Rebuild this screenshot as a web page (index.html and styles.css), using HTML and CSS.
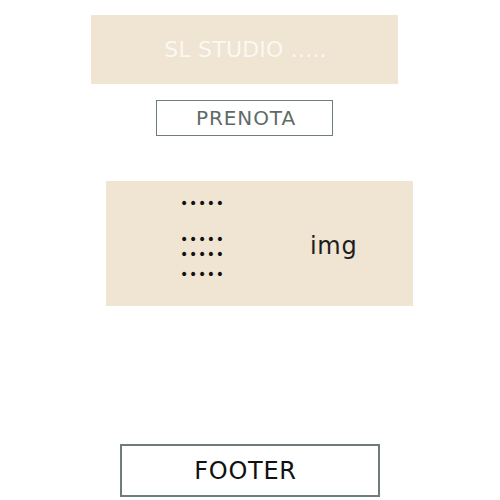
FILE: index.html
```html
<!DOCTYPE html>
<html>
<head>
<meta charset="utf-8">
<link rel="stylesheet" href="styles.css">
</head>
<body>
<div class="page">
  <header class="hero">SL STUDIO .....</header>
  <div class="book">PRENOTA</div>
  <section class="media">
    <div class="dots">
      <div class="row r1">•••••</div>
      <div class="row r2">•••••</div>
      <div class="row r3">•••••</div>
      <div class="row r4">•••••</div>
    </div>
    <div class="img">img</div>
  </section>
  <footer class="footer">FOOTER</footer>
</div>
</body>
</html>
```
FILE: styles.css
```css
html, body {
  margin: 0;
  padding: 0;
  background: #ffffff;
}
body {
  font-family: "DejaVu Sans", "Open Sans", sans-serif;
}
.page {
  display: flex;
  flex-direction: column;
  align-items: flex-start;
}
.hero {
  margin: 15px 0 0 91px;
  width: 307px;
  height: 69px;
  background: #f0e4d2;
  color: #fbf8f2;
  font-size: 22px;
  letter-spacing: 0.2px;
  display: flex;
  align-items: center;
  justify-content: center;
  padding-left: 2px;
  box-sizing: border-box;
}
.book {
  margin: 16px 0 0 156px;
  width: 177px;
  height: 36px;
  box-sizing: border-box;
  border: 1px solid #6f7d77;
  color: #5f6b66;
  font-size: 20px;
  letter-spacing: 0.9px;
  padding-left: 3px;
  display: flex;
  align-items: center;
  justify-content: center;
}
.media {
  margin: 45px 0 0 106px;
  width: 307px;
  height: 125px;
  background: #f0e4d2;
  display: flex;
  align-items: flex-start;
}
.dots {
  margin-left: 74px;
  width: 130px;
  display: flex;
  flex-direction: column;
}
.row {
  font-size: 14px;
  line-height: 15px;
  height: 15px;
  letter-spacing: 0.7px;
  color: #111;
}
.r1 { margin-top: 15px; }
.r2 { margin-top: 21px; }
.r3 { margin-top: 0; }
.r4 { margin-top: 5px; }
.img {
  margin-top: 50px;
  font-size: 24px;
  line-height: 30px;
  letter-spacing: 0.7px;
  color: #1d1d1d;
}
.footer {
  margin: 138px 0 0 120px;
  width: 260px;
  height: 53px;
  box-sizing: border-box;
  border: 2px solid #6f7d77;
  color: #111;
  font-size: 24px;
  letter-spacing: 0.7px;
  padding-right: 9px;
  display: flex;
  align-items: center;
  justify-content: center;
}
```
